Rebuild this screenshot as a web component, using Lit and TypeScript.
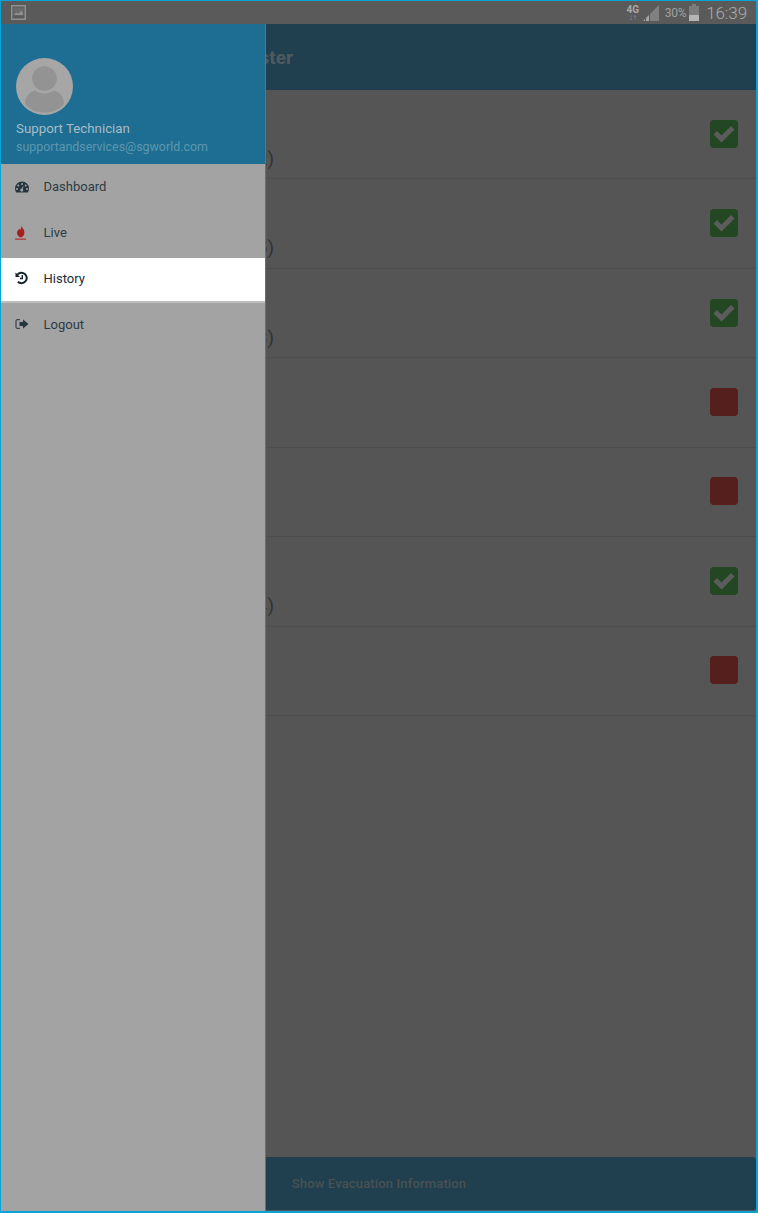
import { LitElement, html, css, svg } from "lit";
import { customElement } from "lit/decorators.js";

const rows = [
  { ok: true, tail: "(12)" },
  { ok: true, tail: "(25)" },
  { ok: true, tail: "(8)" },
  { ok: false, tail: "" },
  { ok: false, tail: "" },
  { ok: true, tail: "(14)" },
  { ok: false, tail: "" },
];

const check = svg`<svg viewBox="0 0 28 28" width="28" height="28"><path d="M3.500 14.500l3.500-3.500 4.500 4.500 9.500-9.500 3.500 3.500-13 13z" fill="#5c5c5c"/></svg>`;

@customElement("app-root")
export class AppRoot extends LitElement {
  static styles = css`
    :host { display: block; width: 758px; height: 1213px; font-family: Roboto, "Liberation Sans", sans-serif; }
    .frame { position: relative; box-sizing: border-box; width: 758px; height: 1213px; border: 1px solid #0aa3d8; border-right-width: 2px; border-bottom-width: 2px; background: #555; display: flex; flex-direction: column; overflow: hidden; }
    .status { height: 23px; flex: none; background: #5a5a5a; display: flex; align-items: center; padding: 0 9px 0 10px; color: #a5a5a5; }
    .status .pic { display: block; }
    .status .right { margin-left: auto; display: flex; align-items: center; }
    .net { font-size: 10px; font-weight: 700; line-height: 9px; text-align: center; width: 14px; color: #a8a8a8; }
    .net span { display: block; font-size: 8px; line-height: 7px; color: #939393; }
    .sig { margin-left: 3px; display: block; }
    .pct { font-size: 12px; margin-left: 6px; color: #a0a0a0; letter-spacing: -0.3px; }
    .bat { margin-left: 3px; display: block; }
    .time { font-size: 17px; font-weight: 300; margin-left: 7px; color: #ababab; letter-spacing: -0.1px; }
    .top-wrap { background: #20404f; flex: none; height: 66px; display: flex; align-items: center; }
    .top { width: 292px; text-align: right; font-size: 19px; font-weight: 700; color: #4f5a60; }
    .list { flex: 1; display: flex; flex-direction: column; }
    .row { box-sizing: border-box; flex: none; height: 89.43px; border-bottom: 1px solid #4e4e4e; display: flex; align-items: center; padding-right: 18px; }
    .tail { width: 273px; flex: none; margin-right: auto; align-self: flex-start; padding-top: 58px; text-align: right; font-size: 19px; line-height: 22px; color: #333; white-space: nowrap; }
    .box { width: 28px; height: 28px; margin-bottom: 1px; border-radius: 4px; display: flex; align-items: center; justify-content: center; }
    .box.ok { background: #234722; }
    .box.no { background: #551f1e; }
    .bottom { flex: none; height: 53px; margin: 0 0 1px 1px; background: #20404f; border-radius: 3px; display: flex; align-items: center; justify-content: center; font-size: 13px; font-weight: 500; color: #4a5052; letter-spacing: 0.15px; }
    .drawer { position: absolute; left: 0; top: 23px; bottom: 0; width: 264px; background: #a3a3a3; border-right: 1px solid #6e6e6e; display: flex; flex-direction: column; }
    .head { height: 140px; flex: none; background: #1d6e92; box-sizing: border-box; padding: 34px 0 0 15px; }
    .avatar { display: block; }
    .name { font-size: 13.3px; line-height: 16px; color: #a9bcc6; margin-top: 6px; }
    .mail { font-size: 12.4px; line-height: 16px; color: #5e97b0; margin-top: 2px; }
    .menu { display: flex; flex-direction: column; }
    .item { height: 46px; box-sizing: border-box; flex: none; display: flex; align-items: center; padding-left: 14px; font-size: 13px; color: #2c3c44; gap: 14.5px; }
    .item svg { display: block; flex: none; }
    .item.first { padding-bottom: 1px; }
    .item.live { height: 48px; padding-bottom: 3px; }
    .item.on { height: 43px; padding-bottom: 3px; background: #fff; color: #1d2c36; box-shadow: 0 2px 0 #bdbdbd; }
  `;

  render() {
    return html`<div class="frame">
      <div class="status">
        <svg class="pic" width="15" height="15" viewBox="0 0 15 15"><rect x="0.75" y="0.75" width="13.500" height="13.500" fill="none" stroke="#8f8f8f" stroke-width="1.500"/><rect x="2.500" y="2.500" width="10" height="8" fill="#6b6b6b"/><path d="M3 10l2.500-2.500 2 1.200 2.500-3 2 2.300V10z" fill="#8f8f8f"/></svg>
        <div class="right">
          <div class="net">4G<span>↓↑</span></div>
          <svg class="sig" width="16" height="16" viewBox="0 0 16 16"><path d="M0 16l2-2v2zM3 16v-3l3-3v6z" fill="#a5a5a5"/><path d="M7 16V9l9-9v16z" fill="#808080"/></svg>
          <span class="pct">30%</span>
          <svg class="bat" width="10" height="17" viewBox="0 0 10 17"><path d="M3 0h4v2h3v15H0V2h3z" fill="#7d7d7d"/><rect y="11" width="10" height="6" fill="#b5b5b5"/></svg>
          <span class="time">16:39</span>
        </div>
      </div>
      <div class="top-wrap"><div class="top">Muster</div></div>
      <div class="list">
        ${rows.map((r) => html`<div class="row">
          <div class="tail">${r.tail}</div>
          <div class="box ${r.ok ? "ok" : "no"}">${r.ok ? check : ""}</div>
        </div>`)}
      </div>
      <div class="bottom">Show Evacuation Information</div>
      <aside class="drawer">
        <div class="head">
          <svg class="avatar" width="57" height="57" viewBox="0 0 57 57">
            <defs><clipPath id="c"><circle cx="28.500" cy="28.500" r="28.500"/></clipPath></defs>
            <circle cx="28.500" cy="28.500" r="28.500" fill="#a6a6a6"/>
            <g clip-path="url(#c)" fill="#939393">
              <circle cx="28.500" cy="20.500" r="12.300"/>
              <path d="M9 46c0-8 5-12 10-13.500 5 4 14 4 19 0 5 1.500 10 5.500 10 13.500-5 6-12 8.500-19.500 8.500S14 52 9 46z"/>
            </g>
          </svg>
          <div class="name">Support Technician</div>
          <div class="mail">supportandservices@sgworld.com</div>
        </div>
        <nav class="menu">
          <div class="item first">
            <svg width="14" height="14" viewBox="0 0 14 14"><path fill-rule="evenodd" fill="#26363e" d="M7 1.500a7 7 0 0 0-7 7c0 1.500.5 2.800 1.200 4h11.600c.7-1.200 1.200-2.500 1.200-4a7 7 0 0 0-7-7zM7 3a1 1 0 1 1 0 2 1 1 0 0 1 0-2zM3.300 4.500a1 1 0 1 1 0 2 1 1 0 0 1 0-2zM10.700 4.500a1 1 0 1 1 0 2 1 1 0 0 1 0-2zM2 8a1 1 0 1 1 0 2 1 1 0 0 1 0-2zM12 8a1 1 0 1 1 0 2 1 1 0 0 1 0-2zM8.700 5.500L7.700 9a1.500 1.500 0 1 1-1.300-.3z"/></svg>
            <span>Dashboard</span>
          </div>
          <div class="item live">
            <svg width="14" height="16" viewBox="0 0 14 16"><path fill="#a81e1e" d="M6.500 0.500c.3 2 2.900 3.700 2.900 7 0 2.700-1.800 4.800-4.100 5-1.500-.6-3.100-2.100-3.300-4.400C1.900 6 3.500 5 4.300 3.500c.3.500.4 1 .5 1.700C5.800 4.200 6.700 2.500 6.500 0.500z"/><rect x="0" y="13.500" width="11" height="1.300" fill="#b53a3a"/></svg>
            <span>Live</span>
          </div>
          <div class="item on">
            <svg width="14" height="14" viewBox="0 0 14 14"><path fill="none" stroke="#14222b" stroke-width="2" d="M2.300 3.600A5.300 5.300 0 1 1 2.800 10.800"/><path fill="#14222b" d="M0.500 1.500L5 6H0.500z"/><path fill="none" stroke="#14222b" stroke-width="1.400" d="M7.300 4v3.500H5"/></svg>
            <span>History</span>
          </div>
          <div class="item">
            <svg width="14" height="14" viewBox="0 0 14 14"><path fill="none" stroke="#3a4a52" stroke-width="1.300" d="M5 2.600H2.500A1.500 1.500 0 0 0 1 4.100v5.800a1.500 1.500 0 0 0 1.500 1.500H5"/><path fill="#26363e" d="M8 2.500L13.500 7 8 11.500V9H4.500V5H8z"/></svg>
            <span>Logout</span>
          </div>
        </nav>
      </aside>
    </div>`;
  }
}
